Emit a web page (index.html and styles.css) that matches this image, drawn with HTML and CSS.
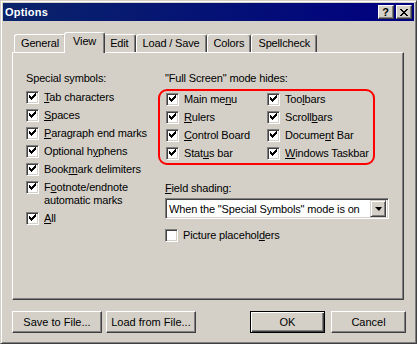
FILE: index.html
```html
<!DOCTYPE html>
<html lang="en">
<head>
    <meta charset="UTF-8">
    <title>Options</title>
    <link rel="stylesheet" href="styles.css">
</head>
<body>
    <div class="dialog">
        <div class="titlebar">
            <span class="title">Options</span>
            <div class="caption-buttons">
                <span class="cap-btn help">?</span>
                <span class="cap-btn close">
                    <svg width="8" height="7" viewBox="0 0 8 7" shape-rendering="crispEdges">
                        <path d="M0 0h2v1h-2zM6 0h2v1h-2zM1 1h2v1h-2zM5 1h2v1h-2zM2 2h4v1h-4zM3 3h2v1h-2zM2 4h4v1h-4zM1 5h2v1h-2zM5 5h2v1h-2zM0 6h2v1h-2zM6 6h2v1h-2z" fill="#000"/>
                    </svg>
                </span>
            </div>
        </div>

        <div class="dialog-body">
            <div class="tabstrip">
                <div class="tab">General</div>
                <div class="tab active">View</div>
                <div class="tab">Edit</div>
                <div class="tab">Load / Save</div>
                <div class="tab">Colors</div>
                <div class="tab">Spellcheck</div>
            </div>

            <div class="panel">
                <div class="col-left">
                    <div class="group-label">Special symbols:</div>
                    <label class="check"><span class="box on"></span><span><u>T</u>ab characters</span></label>
                    <label class="check"><span class="box on"></span><span><u>S</u>paces</span></label>
                    <label class="check"><span class="box on"></span><span><u>P</u>aragraph end marks</span></label>
                    <label class="check"><span class="box on"></span><span>Optional h<u>y</u>phens</span></label>
                    <label class="check"><span class="box on"></span><span>Book<u>m</u>ark delimiters</span></label>
                    <label class="check"><span class="box on"></span><span>F<u>o</u>otnote/endnote<br>automatic marks</span></label>
                    <label class="check"><span class="box on"></span><span><u>A</u>ll</span></label>
                </div>

                <div class="col-right">
                    <div class="group-label">"Full Screen" mode hides:</div>
                    <div class="hides">
                        <label class="check"><span class="box on"></span><span>Main me<u>n</u>u</span></label>
                        <label class="check"><span class="box on"></span><span>Too<u>l</u>bars</span></label>
                        <label class="check"><span class="box on"></span><span><u>R</u>ulers</span></label>
                        <label class="check"><span class="box on"></span><span>Scroll<u>b</u>ars</span></label>
                        <label class="check"><span class="box on"></span><span><u>C</u>ontrol Board</span></label>
                        <label class="check"><span class="box on"></span><span>Docume<u>n</u>t Bar</span></label>
                        <label class="check"><span class="box on"></span><span>Stat<u>u</u>s bar</span></label>
                        <label class="check"><span class="box on"></span><span><u>W</u>indows Taskbar</span></label>
                    </div>

                    <div class="field-label"><u>F</u>ield shading:</div>
                    <div class="combo">
                        <span class="combo-text">When the "Special Symbols" mode is on</span>
                        <span class="combo-btn"><span class="arrow"></span></span>
                    </div>

                    <label class="check picture"><span class="box"></span><span>Picture placehol<u>d</u>ers</span></label>
                </div>
            </div>

            <div class="button-row">
                <button type="button" class="btn wide">Save to File...</button>
                <button type="button" class="btn wide">Load from File...</button>
                <span class="spacer"></span>
                <button type="button" class="btn default">OK</button>
                <button type="button" class="btn">Cancel</button>
            </div>
        </div>
    </div>
</body>
</html>
```

FILE: styles.css
```css
/* window frame */
body {
    margin: 0;
    background: #d4d0c8;
    font-family: "Liberation Sans", Arial, sans-serif;
    font-size: 11px;
    letter-spacing: -0.15px;
    color: #000;
}

.dialog {
    width: 417px;
    height: 344px;
    box-sizing: border-box;
    background: #d4d0c8;
    border: 1px solid;
    border-color: #d4d0c8 #404040 #404040 #d4d0c8;
    box-shadow: inset 1px 1px #fff, inset -1px -1px #808080;
    padding: 2px;
}

/* title bar */
.titlebar {
    height: 18px;
    display: flex;
    align-items: center;
    justify-content: space-between;
    background: linear-gradient(to right, #0a246a, #000080);
    padding: 0 2px 0 2px;
}

.title {
    color: #fff;
    font-weight: bold;
    font-size: 11px;
    letter-spacing: 0.2px;
}

.caption-buttons {
    display: flex;
    gap: 2px;
}

.cap-btn {
    width: 16px;
    height: 14px;
    box-sizing: border-box;
    background: #d4d0c8;
    border: 1px solid;
    border-color: #fff #404040 #404040 #fff;
    box-shadow: inset -1px -1px #808080;
    display: flex;
    align-items: center;
    justify-content: center;
}

.cap-btn.help {
    font-weight: bold;
    font-size: 11px;
    line-height: 11px;
    padding-right: 1px;
}

/* body */
.dialog-body {
    padding: 11px 10px 0 9px;
}

.tabstrip {
    display: flex;
    align-items: flex-end;
    height: 20px;
    padding-left: 2px;
    position: relative;
    z-index: 1;
}

.tab {
    height: 18px;
    box-sizing: border-box;
    padding: 0 6px;
    line-height: 17px;
    border-top: 1px solid #fff;
    border-left: 1px solid #fff;
    border-right: 1px solid #404040;
    box-shadow: inset -1px 0 #808080;
    border-radius: 3px 3px 0 0;
    background: #d4d0c8;
}

.tab.active {
    height: 21px;
    margin: 0 -2px -1px;
    padding: 0 8px;
    line-height: 17px;
    position: relative;
    z-index: 2;
}

.tab.active + .tab {
    border-left-color: transparent;
}

.panel {
    height: 248px;
    box-sizing: border-box;
    border: 1px solid;
    border-color: #fff #404040 #404040 #fff;
    box-shadow: inset -1px -1px #808080;
    padding: 19px 0 0 13px;
    display: grid;
    grid-template-columns: 139px 1fr;
    align-items: start;
}

.group-label {
    line-height: 13px;
    margin-bottom: 4px;
}

/* checkboxes */
.check {
    display: flex;
    align-items: flex-start;
    gap: 5px;
    padding: 2px 0 3px;
    line-height: 13px;
    white-space: nowrap;
}

.box {
    flex: none;
    width: 13px;
    height: 13px;
    box-sizing: border-box;
    background: #fff;
    border: 1px solid;
    border-color: #808080 #fff #fff #808080;
    box-shadow: inset 1px 1px #404040, inset -1px -1px #d4d0c8;
    position: relative;
}

.box.on::after {
    content: '';
    position: absolute;
    left: 2px;
    top: 1px;
    width: 7px;
    height: 7px;
    background: no-repeat url("data:image/svg+xml,%3Csvg xmlns='http://www.w3.org/2000/svg' width='7' height='7' shape-rendering='crispEdges'%3E%3Cpath d='M6 0h1v3h-1zM5 1h1v3h-1zM4 2h1v3h-1zM3 3h1v3h-1zM2 4h1v3h-1zM1 3h1v3h-1zM0 2h1v3h-1z' fill='%23000'/%3E%3C/svg%3E");
}

/* full screen group */
.hides {
    margin: 3px 0 0 -7px;
    width: 217px;
    box-sizing: border-box;
    border: 2px solid #ff0000;
    border-radius: 9px;
    padding: 0 0 0 6px;
    display: grid;
    grid-template-columns: 101px 1fr;
}

.field-label {
    margin-top: 17px;
    line-height: 13px;
}

.combo {
    margin-top: 3px;
    width: 224px;
    height: 21px;
    box-sizing: border-box;
    background: #fff;
    border: 1px solid;
    border-color: #808080 #fff #fff #808080;
    box-shadow: inset 1px 1px #404040, inset -1px -1px #d4d0c8;
    padding: 2px;
    display: flex;
    align-items: center;
}

.combo-text {
    flex: 1;
    padding-left: 1px;
    white-space: nowrap;
    overflow: hidden;
}

.combo-btn {
    flex: none;
    width: 16px;
    height: 17px;
    box-sizing: border-box;
    background: #d4d0c8;
    border: 1px solid;
    border-color: #d4d0c8 #404040 #404040 #d4d0c8;
    box-shadow: inset 1px 1px #fff, inset -1px -1px #808080;
    display: flex;
    align-items: center;
    justify-content: center;
}

.arrow {
    width: 0;
    height: 0;
    border-left: 4px solid transparent;
    border-right: 3px solid transparent;
    border-top: 4px solid #000;
}

.check.picture {
    margin-top: 8px;
}

/* bottom buttons */
.button-row {
    display: flex;
    margin-top: 11px;
    margin-right: -2px;
}

.spacer {
    flex: 1;
}

.btn {
    width: 75px;
    height: 22px;
    box-sizing: border-box;
    margin: 0 0 0 6px;
    padding: 0;
    font: inherit;
    color: #000;
    background: #d4d0c8;
    border: 1px solid;
    border-color: #fff #404040 #404040 #fff;
    box-shadow: inset -1px -1px #808080;
}

.btn.wide {
    width: 90px;
    margin-left: 4px;
}

.btn.wide:first-child {
    margin-left: 0;
}

.btn.default {
    border: 1px solid #000;
    box-shadow: inset 1px 1px #fff, inset -1px -1px #404040, inset -2px -2px #808080;
}
```
